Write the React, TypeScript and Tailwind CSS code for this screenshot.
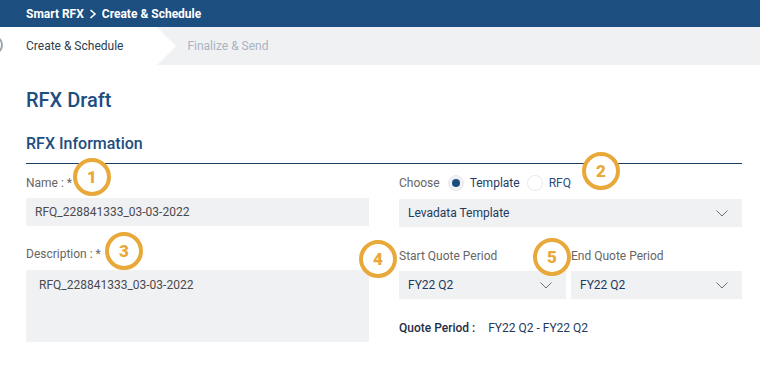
import React from "react";

function Chevron() {
  return (
    <svg width="12" height="7" viewBox="0 0 12 7" fill="none" className="shrink-0">
      <polyline points="0.5,0.5 6,6 11.5,0.5" stroke="#6b7280" strokeWidth="1" />
    </svg>
  );
}

function Badge({ n, className }: { n: string; className: string }) {
  return (
    <div
      className={
        "absolute w-[38px] h-[38px] rounded-full border-4 border-[#e8a93a] bg-white flex items-center justify-center text-[#e8a93a] text-[17px] font-black leading-none " +
        className
      }
    >
      {n}
    </div>
  );
}

function Select({ value, className }: { value: string; className?: string }) {
  return (
    <div
      className={
        "h-7 bg-[#f0f1f3] flex items-center justify-between pl-[9px] pr-[14px] text-[12px] text-[#1f3a5e] " +
        (className ?? "")
      }
    >
      <span>{value}</span>
      <Chevron />
    </div>
  );
}

export default function App() {
  return (
    <div
      className="relative w-[760px] h-[367px] bg-white overflow-hidden"
      style={{ fontFamily: "Roboto, 'Liberation Sans', sans-serif" }}
    >
      {/* Top header */}
      <div className="h-[27px] bg-[#1d4e80] flex items-center pl-[26px] text-white text-[12px] font-bold">
        <span>Smart RFX</span>
        <svg width="8" height="10" viewBox="0 0 8 10" className="mx-[5px]" fill="none">
          <polyline points="1.5,1 6,5 1.5,9" stroke="white" strokeWidth="1.6" />
        </svg>
        <span>Create &amp; Schedule</span>
      </div>

      {/* Steps bar */}
      <div className="relative h-[38px] bg-[#f0f1f3] flex items-center">
        <div className="absolute left-0 top-0 h-[38px] w-[176px] bg-white [clip-path:polygon(0_0,157px_0,176px_50%,157px_100%,0_100%)]" />
        <div className="absolute left-[-17px] top-[8px] w-[20px] h-[20px] rounded-full border-2 border-[#9aa2ab]" />
        <span className="relative ml-[26px] text-[12px] text-[#2d3e50]">Create &amp; Schedule</span>
        <span className="relative ml-[64px] text-[12px] text-[#a9b4c1]">Finalize &amp; Send</span>
      </div>

      {/* Content */}
      <div className="px-[26px] pr-[18px]">
        <div className="mt-[21px] h-7 flex items-center text-[20px] font-medium text-[#1d4e80]">RFX Draft</div>
        <div className="mt-[18px] h-6 flex items-center text-[16px] font-medium text-[#1d4e80]">RFX Information</div>
        <div className="mt-[7px] h-px bg-[#1d3e63]" />

        <div className="grid grid-cols-2 gap-[30px]">
          {/* Left column */}
          <div className="flex flex-col pt-[11px]">
            <div className="h-4 flex items-center text-[12px] text-[#666]">Name : *</div>
            <div className="mt-[7px] h-7 bg-[#f0f1f3] flex items-center pl-[9px] text-[12px] text-[#4a4a4f]">
              RFQ_228841333_03-03-2022
            </div>
            <div className="mt-5 h-4 flex items-center text-[12px] text-[#666]">Description : *</div>
            <div className="mt-2 h-[72px] bg-[#f0f1f3] pl-[13px] pt-[6px] text-[12px] text-[#4a4a4f]">
              RFQ_228841333_03-03-2022
            </div>
          </div>

          {/* Right column */}
          <div className="flex flex-col pt-[11px]">
            <div className="h-4 flex items-center text-[12px]">
              <span className="text-[#666]">Choose</span>
              <span className="ml-[8px] w-[16px] h-[16px] rounded-full bg-[#f1f2f4] border border-[#e8eaee] flex items-center justify-center">
                <span className="w-[8px] h-[8px] rounded-full bg-[#1d4e80]" />
              </span>
              <span className="ml-[6px] text-[#1f3b63]">Template</span>
              <span className="ml-[7px] w-[16px] h-[16px] rounded-full bg-white border border-[#e8eaee]" />
              <span className="ml-[6px] text-[#2a4d80]">RFQ</span>
            </div>
            <Select value="Levadata Template" className="mt-2" />
            <div className="mt-[21px] grid grid-cols-[167px_1fr] gap-[5px]">
              <div className="h-4 flex items-center text-[12px] text-[#666]">Start Quote Period</div>
              <div className="h-4 flex items-center text-[12px] text-[#666]">End Quote Period</div>
              <Select value="FY22 Q2" className="mt-[2px]" />
              <Select value="FY22 Q2" className="mt-[2px]" />
            </div>
            <div className="mt-[21px] h-4 flex items-center text-[12px]">
              <span className="font-medium text-[#1f2f45]">Quote Period :</span>
              <span className="ml-[13px] text-[#1f3a5e]">FY22 Q2 - FY22 Q2</span>
            </div>
          </div>
        </div>
      </div>

      <Badge n="1" className="left-[73px] top-[158px]" />
      <Badge n="2" className="left-[582px] top-[152px]" />
      <Badge n="3" className="left-[105px] top-[232px]" />
      <Badge n="4" className="left-[359px] top-[240px]" />
      <Badge n="5" className="left-[533px] top-[238px]" />
    </div>
  );
}
